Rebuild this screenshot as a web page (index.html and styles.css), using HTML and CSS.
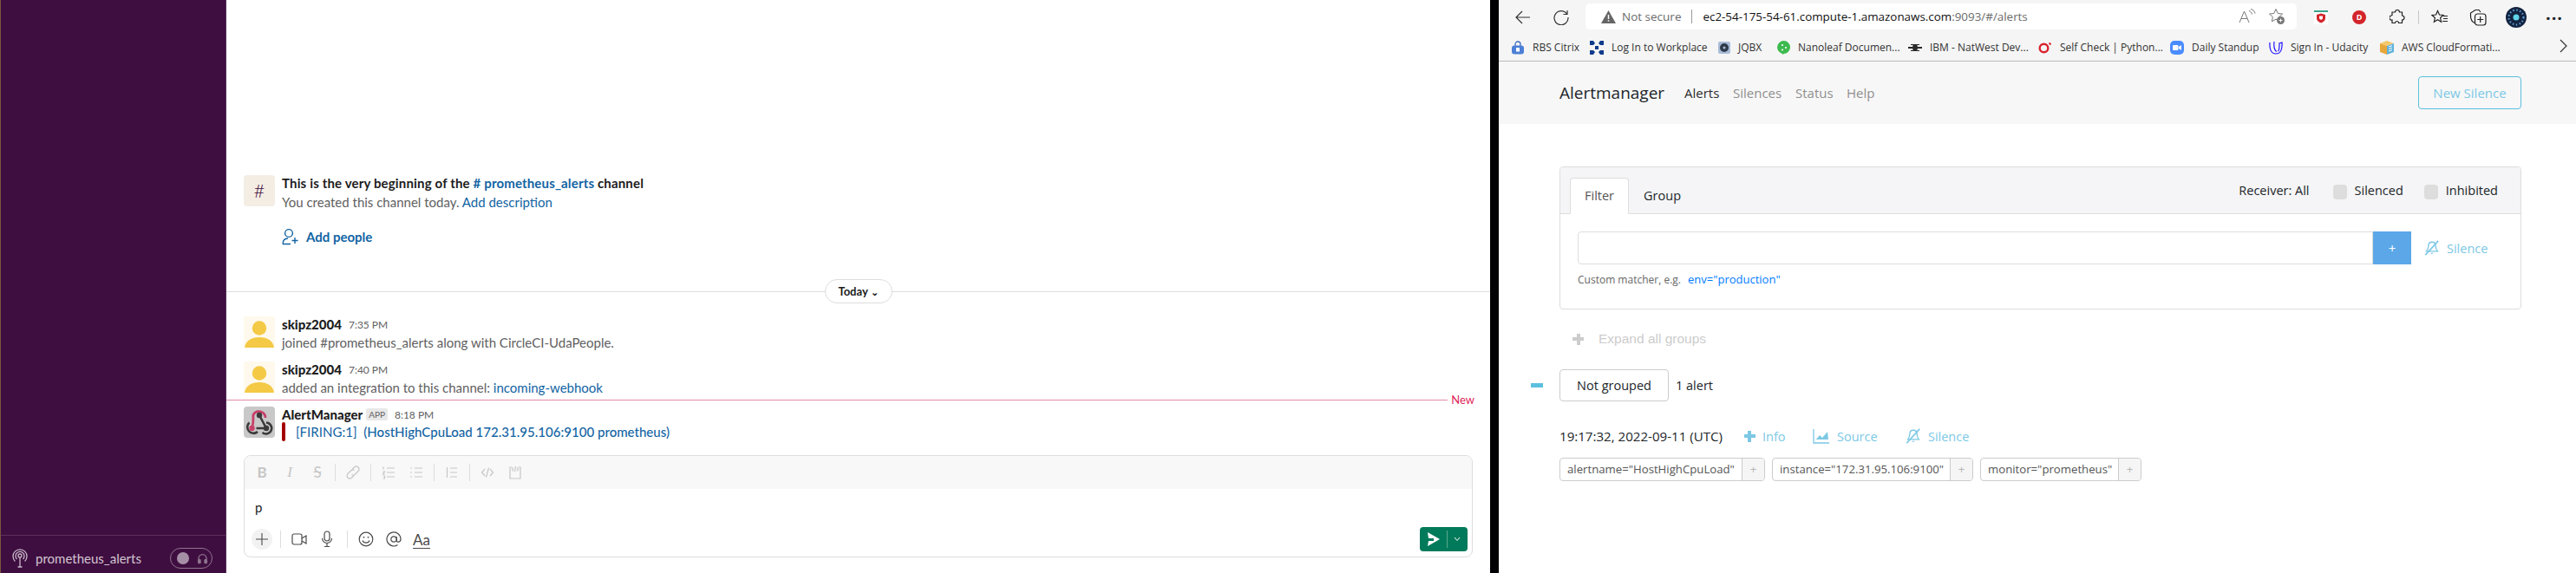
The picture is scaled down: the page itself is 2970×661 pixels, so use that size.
FILE: index.html
```html
<!DOCTYPE html>
<html lang="en">
<head>
    <meta charset="UTF-8">
    <title>Slack and Alertmanager</title>
    <link rel="stylesheet" href="styles.css">
</head>
<body>
    <svg class="sprite" width="0" height="0">
        <symbol id="avatar" viewBox="0 0 36 36">
            <rect width="36" height="36" rx="3" fill="#fef9ec"/>
            <ellipse cx="18" cy="13.5" rx="8.2" ry="8.2" fill="#f4c945"/>
            <path d="M1 36C2 28 9 24 18 24S34 28 35 36Z" fill="#f4c945"/>
        </symbol>
        <symbol id="bell-slash" viewBox="0 0 20 20">
            <path d="M10 2.5c-3 0-4.6 2.2-4.6 5 0 3.4-1 5-2.6 6.8h14.4c-1.6-1.8-2.6-3.4-2.6-6.8 0-2.8-1.6-5-4.6-5z" fill="none" stroke="currentColor" stroke-width="1.5"/>
            <path d="M8 16.5a2.2 2.2 0 0 0 4 0z" fill="currentColor"/>
            <path d="M1.5 19L18 1" stroke="currentColor" stroke-width="1.8"/>
        </symbol>
    </svg>

    <aside class="sidebar">
        <div class="sidebar-spacer"></div>
        <div class="huddle">
            <svg class="huddle-icon" viewBox="0 0 18 22" fill="none" stroke="#c8b9c9" stroke-width="1.3">
                <circle cx="9" cy="8" r="2"/>
                <path d="M5.5 12a5 5 0 1 1 7 0M3.4 14.5a8 8 0 1 1 11.2 0"/>
                <path d="M9 10v11M6.5 21h5"/>
            </svg>
            <span class="huddle-name">prometheus_alerts</span>
            <div class="huddle-toggle">
                <span class="huddle-knob"></span>
                <svg class="huddle-phones" viewBox="0 0 16 16" fill="none" stroke="#8f7490" stroke-width="1.6">
                    <path d="M2.5 11V8a5.5 5.5 0 0 1 11 0v3"/>
                    <rect x="2" y="10" width="3" height="5" rx="1" fill="#8f7490"/>
                    <rect x="11" y="10" width="3" height="5" rx="1" fill="#8f7490"/>
                </svg>
            </div>
        </div>
    </aside>

    <main class="channel">
        <div class="channel-start">
            <div class="hash-box">#</div>
            <div>
                <div class="start-title">This is the very beginning of the <a class="link"># prometheus_alerts</a> channel</div>
                <div class="start-sub">You created this channel today. <a class="link">Add description</a></div>
            </div>
        </div>
        <div class="add-people">
            <svg width="20" height="20" viewBox="0 0 20 20" fill="none" stroke="#1264a3" stroke-width="1.4">
                <circle cx="8" cy="6" r="4.4"/>
                <path d="M1 18.5c0-4 2.5-6.3 6-6.5M1 18.5h9M15 11v7M11.5 14.5h7"/>
            </svg>
            <span>Add people</span>
        </div>
        <div class="day-divider"><span class="day-pill">Today <span class="caret">&#8964;</span></span></div>

        <div class="message">
            <svg class="avatar"><use href="#avatar"/></svg>
            <div>
                <div class="msg-head"><b class="msg-name">skipz2004</b><span class="msg-time">7:35 PM</span></div>
                <div class="msg-text">joined #prometheus_alerts along with CircleCI-UdaPeople.</div>
            </div>
        </div>
        <div class="message">
            <svg class="avatar"><use href="#avatar"/></svg>
            <div>
                <div class="msg-head"><b class="msg-name">skipz2004</b><span class="msg-time">7:40 PM</span></div>
                <div class="msg-text">added an integration to this channel: <a class="link">incoming-webhook</a></div>
            </div>
        </div>
        <div class="new-line"><span class="new-rule"></span><span class="new-label">New</span></div>
        <div class="message message-app">
            <svg class="avatar" viewBox="0 0 36 36" fill="none">
                <rect width="36" height="36" rx="4" fill="#c8c8c8"/>
                <path d="M25 13A7.500 7.500 0 0 0 11 9.500C10.500 13 12 17 9.500 25" stroke="#c9406a" stroke-width="2.800"/>
                <circle cx="9.500" cy="25" r="3.200" fill="#c9406a"/>
                <path d="M18 10l8 15M14.500 25H26M26 18.500A6.500 6.500 0 1 1 21.500 30M6.500 18.500A7 7 0 1 0 16 29" stroke="#3a3a3a" stroke-width="2.600"/>
                <circle cx="18" cy="10" r="3.200" fill="#3a3a3a"/>
                <circle cx="26" cy="25" r="3.200" fill="#3a3a3a"/>
            </svg>
            <div>
                <div class="msg-head"><b class="msg-name">AlertManager</b><span class="app-tag">APP</span><span class="msg-time">8:18 PM</span></div>
                <div class="attachment">
                    <span class="attach-bar"></span>
                    <a class="link attach-text">[FIRING:1]&nbsp; <span class="attach-strong">(HostHighCpuLoad 172.31.95.106:9100 prometheus)</span></a>
                </div>
            </div>
        </div>

        <div class="composer">
            <div class="format-bar">
                <span class="fmt fmt-b">B</span>
                <span class="fmt fmt-i">I</span>
                <span class="fmt fmt-s">S</span>
                <span class="fmt-sep"></span>
                <span class="fmt"><svg width="16" height="16" viewBox="0 0 16 16" fill="none" stroke="#c6c6c6" stroke-width="1.2"><path d="M7 4.5l2.5-2.5a3 3 0 0 1 4.5 4.5l-4 4a3 3 0 0 1-3.5 0M9 11.5L6.500 14a3 3 0 0 1-4.500-4.500l4-4a3 3 0 0 1 3.500 0"/></svg></span>
                <span class="fmt-sep"></span>
                <span class="fmt"><svg width="16" height="16" viewBox="0 0 16 16" fill="none" stroke="#c6c6c6" stroke-width="1.2"><path d="M6 3h9M6 8h9M6 13h9M2 1.500v3M1.500 7h2l-2 3h2M1.500 12h2v3h-2"/></svg></span>
                <span class="fmt"><svg width="16" height="16" viewBox="0 0 16 16" fill="none" stroke="#c6c6c6" stroke-width="1.2"><path d="M6 3h9M6 8h9M6 13h9"/><path d="M2 2.500v1M2 7.500v1M2 12.500v1" stroke-width="1.800"/></svg></span>
                <span class="fmt-sep"></span>
                <span class="fmt"><svg width="16" height="16" viewBox="0 0 16 16" fill="none" stroke="#c6c6c6" stroke-width="1.2"><path d="M2.500 2v12M6 3h8M6 8h8M6 13h8"/></svg></span>
                <span class="fmt-sep"></span>
                <span class="fmt"><svg width="16" height="16" viewBox="0 0 16 16" fill="none" stroke="#c6c6c6" stroke-width="1.2"><path d="M5 4L1.500 8 5 12M11 4l3.500 4L11 12M9.500 2.500l-3 11"/></svg></span>
                <span class="fmt"><svg width="16" height="16" viewBox="0 0 16 16" fill="none" stroke="#c6c6c6" stroke-width="1.2"><path d="M4.500 2H2v13h12V2h-2.500M6 2.500L4.500 4.500 6 6.500M10 2.500l1.500 2L10 6.500M8.500 1l-1 6"/></svg></span>
            </div>
            <div class="input-row">p</div>
            <div class="action-bar">
                <span class="plus-btn"><svg width="14" height="14" viewBox="0 0 14 14" stroke="#4a4a4a" stroke-width="1.1"><path d="M7 0v14M0 7h14"/></svg></span>
                <span class="act-sep"></span>
                <span class="act"><svg width="18" height="16" viewBox="0 0 18 16" fill="none" stroke="#4a4a4a" stroke-width="1.2"><rect x="1" y="2" width="11" height="12" rx="2"/><path d="M12 7l5-3v9l-5-3"/></svg></span>
                <span class="act"><svg width="14" height="20" viewBox="0 0 14 20" fill="none" stroke="#4a4a4a" stroke-width="1.2"><rect x="4" y="1" width="6" height="11" rx="3"/><path d="M1.500 9a5.500 5.500 0 0 0 11 0M7 15v3M4 18.500h6"/></svg></span>
                <span class="act-sep act-sep-wide"></span>
                <span class="act"><svg width="18" height="18" viewBox="0 0 18 18" fill="none" stroke="#4a4a4a" stroke-width="1.2"><circle cx="9" cy="9" r="7.800"/><path d="M5 10.500c1 3.500 7 3.500 8 0"/><path d="M6.500 6v1.500M11.500 6v1.500" stroke-width="1.600"/></svg></span>
                <span class="act"><svg width="18" height="18" viewBox="0 0 18 18" fill="none" stroke="#4a4a4a" stroke-width="1.2"><circle cx="9" cy="9" r="3.200"/><path d="M12.200 6v4.500c0 2.500 4.800 2.500 4.800-1.500a8 8 0 1 0-3.500 6.600"/></svg></span>
                <span class="act act-text">Aa</span>
                <span class="send-btn">
                    <svg class="send-arrow" width="14" height="16" viewBox="0 0 14 16" fill="#fff"><path d="M0 0l14 8L0 16l1-6h6V7H1z"/></svg>
                    <span class="send-sep"></span>
                    <svg width="8" height="6" viewBox="0 0 8 6" fill="none" stroke="#fff" stroke-width="1"><path d="M1 1l3 3.500L7 1"/></svg>
                </span>
            </div>
        </div>
    </main>

    <div class="split"></div>

    <section class="browser">
        <div class="toolbar">
            <span class="tool"><svg width="18" height="16" viewBox="0 0 18 16" fill="none" stroke="#333" stroke-width="1.200"><path d="M17 8H1M8 1L1 8l7 7"/></svg></span>
            <span class="tool"><svg width="18" height="18" viewBox="0 0 18 18" fill="none" stroke="#333" stroke-width="1.200"><path d="M15.500 5A8 8 0 1 0 17 9M16 1v4.500h-4.500"/></svg></span>
            <div class="address">
                <svg width="17" height="15" viewBox="0 0 17 15"><path d="M8.500 0L17 15H0z" fill="#666"/><path d="M8.500 5v5M8.500 11.200v1.600" stroke="#fff" stroke-width="1.500"/></svg>
                <span class="not-secure">Not secure</span>
                <span class="addr-sep"></span>
                <span class="url">ec2-54-175-54-61.compute-1.amazonaws.com<span class="url-dim">:9093/#/alerts</span></span>
                <svg class="addr-read" width="20" height="18" viewBox="0 0 20 18" fill="none" stroke="#777" stroke-width="1"><path d="M1 16L6.500 3 12 16M3 11.500h7M12 2.500c2 .5 3 2 3.500 4M14 .5c2.500.5 4.500 2.500 5 5"/></svg>
                <svg class="addr-star" width="20" height="20" viewBox="0 0 20 20"><path d="M9 1.500l2.300 5 5.200.6-3.900 3.500 1 5.200-4.600-2.600-4.600 2.600 1-5.200L1.500 7.100l5.200-.6z" fill="none" stroke="#777" stroke-width="1"/><circle cx="14.500" cy="14.500" r="4.500" fill="#777"/><path d="M14.500 12.500v4M12.500 14.500h4" stroke="#fff"/></svg>
            </div>
            <span class="tool ext-first">
                <svg width="16" height="16" viewBox="0 0 16 16"><rect width="16" height="16" fill="#fff"/><rect width="16" height="2" fill="#3aa389"/><path d="M3 5l5-1.500L13 5v4c0 3-2.500 4.500-5 5.500C5.500 13.500 3 12 3 9z" fill="#d3242b"/><path d="M6 6.500h4v3L8 11 6 9.500z" fill="#fff"/></svg>
            </span>
            <span class="tool"><span class="ext-d">D</span></span>
            <span class="tool"><svg width="18" height="18" viewBox="0 0 18 18" fill="none" stroke="#222" stroke-width="1.200"><path d="M6.500 3a2.500 2.500 0 0 1 5 0h3v4a2.500 2.500 0 0 1 0 5v3.500h-4a2 2 0 0 0-4 0h-3.500v-3.500a2.500 2.500 0 0 1-1-5 2.500 2.500 0 0 1 1-.5V3z"/></svg></span>
            <span class="tool-sep"></span>
            <span class="tool"><svg width="20" height="18" viewBox="0 0 20 18" fill="none" stroke="#222" stroke-width="1.200"><path d="M7.500 1.500l2 4.500 4.500.5-3.400 3 1 4.700-4.100-2.400-4.100 2.400 1-4.700L1 6.500 5.500 6zM14 7.500h5M14 10.500h5M13 13.500h6"/></svg></span>
            <span class="tool"><svg width="20" height="20" viewBox="0 0 20 20" fill="none" stroke="#222" stroke-width="1.200"><path d="M6 16.500C3 15 1.500 12 1.500 8.500V5L7 1.500h4L13 4"/><rect x="6.500" y="6" width="12.500" height="13" rx="3"/><path d="M12.700 9v7M9.200 12.500h7"/></svg></span>
            <span class="tool"><svg width="24" height="24" viewBox="0 0 24 24"><circle cx="12" cy="12" r="12" fill="#14233f"/><circle cx="12" cy="12" r="8.500" fill="none" stroke="#5fa8e0" stroke-width="2" stroke-dasharray="1.500 2.500"/><circle cx="12" cy="12" r="3.500" fill="#5fd4ea"/></svg></span>
            <span class="tool tool-dots">&#183;&#183;&#183;</span>
        </div>

        <div class="bookmarks">
            <span class="bm"><svg width="16" height="16" viewBox="0 0 16 16"><path d="M5 6V4a3 3 0 0 1 6 0v2" fill="none" stroke="#3d6cc0" stroke-width="1.300"/><rect x="1" y="5.500" width="14" height="10" rx="3" fill="#4c7fd6"/><rect x="6" y="8" width="4" height="4.500" fill="#fff"/></svg>RBS Citrix</span>
            <span class="bm"><svg width="16" height="16" viewBox="0 0 16 16" fill="#0f3c8c"><path d="M0 0h4l2 3-2 2H0zM16 0h-4l-2 3 2 2h4zM0 16h4l2-3-2-2H0zM16 16h-4l-2-3 2-2h4z"/><rect x="6" y="6" width="4" height="4"/></svg>Log In to Workplace</span>
            <span class="bm"><svg width="14" height="14" viewBox="0 0 14 14"><rect width="14" height="14" rx="2" fill="#a9bcd8"/><circle cx="7" cy="7" r="5" fill="#2f3a4a"/><circle cx="7" cy="7" r="1.500" fill="#a9bcd8"/></svg>JQBX</span>
            <span class="bm"><svg width="15" height="16" viewBox="0 0 15 16"><path d="M7.500 0a7.500 7.500 0 0 1 0 15l-1 1-1-1.300A7.500 7.500 0 0 1 7.500 0z" fill="#3dba4e"/><circle cx="6" cy="5" r="1.100" fill="#fff"/><circle cx="10" cy="8" r="1.100" fill="#fff"/><circle cx="6" cy="10.500" r="1.100" fill="#fff"/></svg>Nanoleaf Documen...</span>
            <span class="bm"><svg width="16" height="12" viewBox="0 0 16 12" fill="#2a2a2a"><ellipse cx="8" cy="6" rx="3" ry="4"/><path d="M0 5h5v2H0zM11 5h5v2h-5zM3 2h10v1H3zM3 9h10v1H3z"/></svg>IBM - NatWest Dev...</span>
            <span class="bm"><svg width="16" height="14" viewBox="0 0 16 14" fill="none" stroke="#d9232e" stroke-width="2.400"><circle cx="6.500" cy="7.500" r="4.800"/><path d="M12.500 1.500l2 2" stroke-width="2"/></svg>Self Check | Python...</span>
            <span class="bm"><svg width="16" height="16" viewBox="0 0 16 16"><rect width="16" height="16" rx="5" fill="#4a8cff"/><rect x="3" y="5" width="6.500" height="6" rx="1.200" fill="#fff"/><path d="M10 7l3-2v6l-3-2z" fill="#fff"/></svg>Daily Standup</span>
            <span class="bm"><svg width="16" height="16" viewBox="0 0 16 16" fill="none" stroke="#2015ff" stroke-width="1.200"><path d="M1 2c-.5 7 1 13 7 13s7.500-6 7-13l-3 1c0 4 0 8-1.500 9M6 1c-.5 5 0 10 3 11.500"/></svg>Sign In - Udacity</span>
            <span class="bm"><svg width="16" height="16" viewBox="0 0 16 16"><path d="M0 3l8-3 8 3-8 3z" fill="#f7c96a"/><path d="M0 3l8 3v10l-8-3z" fill="#e8a73a"/><path d="M8 6l8-3v10l-8 3z" fill="#5db2de"/><path d="M10 7l4-1.300M10 9.500l4-1.300M10 12l4-1.300" stroke="#fff"/></svg>AWS CloudFormati...</span>
            <span class="bm-more"><svg width="9" height="16" viewBox="0 0 9 16" fill="none" stroke="#333" stroke-width="1.200"><path d="M1 1l7 7-7 7"/></svg></span>
        </div>

        <nav class="am-nav">
            <span class="am-brand">Alertmanager</span>
            <div class="am-links">
                <span class="am-link am-active">Alerts</span>
                <span class="am-link">Silences</span>
                <span class="am-link">Status</span>
                <span class="am-link">Help</span>
            </div>
            <span class="btn-new">New Silence</span>
        </nav>

        <div class="am-page">
            <div class="card">
                <div class="card-head">
                    <span class="tab tab-active">Filter</span>
                    <span class="tab">Group</span>
                    <span class="receiver">Receiver: All</span>
                    <span class="check"><i class="check-box"></i>Silenced</span>
                    <span class="check"><i class="check-box"></i>Inhibited</span>
                </div>
                <div class="card-body">
                    <div class="filter-row">
                        <div class="filter-input"></div>
                        <span class="filter-add">+</span>
                        <span class="action action-silence"><svg class="bell"><use href="#bell-slash"/></svg>Silence</span>
                    </div>
                    <div class="hint">Custom matcher, e.g. <a class="hint-link">env="production"</a></div>
                </div>
            </div>

            <div class="expand"><span class="expand-plus"></span>Expand all groups</div>

            <div class="group-row">
                <span class="collapse-bar"></span>
                <span class="group-box">Not grouped</span>
                <span class="group-count">1 alert</span>
            </div>

            <div class="alert-row">
                <span class="alert-time">19:17:32, 2022-09-11 (UTC)</span>
                <span class="action action-info"><span class="info-plus"></span>Info</span>
                <span class="action action-source">
                    <svg width="20" height="18" viewBox="0 0 20 18"><path d="M1 1v16h18" fill="none" stroke="currentColor" stroke-width="1.300"/><path d="M3 14l5-6 3 3 6-7 1 9H3z" fill="currentColor"/></svg>Source
                </span>
                <span class="action action-alert-silence"><svg class="bell"><use href="#bell-slash"/></svg>Silence</span>
            </div>

            <div class="labels">
                <span class="label label-name"><span class="label-text">alertname="HostHighCpuLoad"</span><span class="label-add">+</span></span>
                <span class="label label-instance"><span class="label-text">instance="172.31.95.106:9100"</span><span class="label-add">+</span></span>
                <span class="label label-monitor"><span class="label-text">monitor="prometheus"</span><span class="label-add">+</span></span>
            </div>
        </div>
    </section>
</body>
</html>
```

FILE: styles.css
```css
* {
    margin: 0;
    padding: 0;
    box-sizing: border-box;
}

body {
    width: 2970px;
    height: 661px;
    display: flex;
    overflow: hidden;
    background: white;
    font-family: 'Lato', sans-serif;
}

.sprite {
    position: absolute;
}

/* slack sidebar */
.sidebar {
    width: 261px;
    flex: none;
    display: flex;
    flex-direction: column;
    background: #3f0e40;
    border-left: 1px solid #7a5540;
    border-right: 1px solid #5a2f5b;
}

.sidebar-spacer {
    flex: 1;
}

.huddle {
    height: 44px;
    border-top: 1px solid #5a315b;
    display: flex;
    align-items: center;
    padding: 9px 0 0 13px;
}

.huddle-icon {
    width: 18px;
    height: 22px;
}

.huddle-name {
    margin-left: 9px;
    width: 155px;
    color: #d2c6d2;
    font-size: 15px;
}

.huddle-toggle {
    width: 49px;
    height: 24px;
    border: 1px solid #8f7490;
    border-radius: 12px;
    display: flex;
    align-items: center;
    gap: 9px;
    padding-left: 7px;
}

.huddle-knob {
    width: 14px;
    height: 14px;
    border-radius: 50%;
    background: #a58fa6;
}

.huddle-phones {
    width: 13px;
    height: 14px;
}

/* slack channel */
.channel {
    width: 1457px;
    flex: none;
    color: #1d1c1d;
    font-size: 15px;
}

.link {
    color: #1264a3;
}

.channel-start {
    margin: 202px 0 0 20px;
    height: 36px;
    display: flex;
    gap: 8px;
}

.hash-box {
    width: 36px;
    height: 36px;
    border-radius: 4px;
    background: #f4ede4;
    color: #3f0e40;
    font-size: 22px;
    font-weight: 300;
    line-height: 36px;
    text-align: center;
}

.start-title {
    font-weight: 700;
    line-height: 18px;
    letter-spacing: 0.16px;
}

.start-sub {
    margin-top: 4px;
    font-size: 15px;
    line-height: 18px;
    color: #616061;
}

.add-people {
    margin: 25px 0 0 64px;
    height: 20px;
    display: flex;
    align-items: center;
    gap: 8px;
    color: #1264a3;
    font-weight: 700;
}

.day-divider {
    margin-top: 39px;
    height: 28px;
    display: flex;
    justify-content: center;
    position: relative;
}

.day-divider::before {
    content: "";
    position: absolute;
    left: 0;
    right: 0;
    top: 14px;
    border-top: 1px solid #dddddd;
}

.day-pill {
    position: relative;
    width: 78px;
    border: 1px solid #dddddd;
    border-radius: 14px;
    background: white;
    font-size: 13px;
    font-weight: 700;
    line-height: 26px;
    text-align: center;
}

.caret {
    font-size: 11px;
}

.message {
    margin: 15px 0 0 20px;
    height: 36px;
    display: flex;
    gap: 8px;
}

.message + .message {
    margin-top: 16px;
}

.avatar {
    width: 36px;
    height: 36px;
    flex: none;
}

.msg-head {
    height: 18px;
    display: flex;
    align-items: center;
}

.msg-name {
    font-weight: 900;
}

.msg-time {
    margin-left: 8px;
    color: #616061;
    font-size: 12px;
}

.msg-text {
    margin-top: 3px;
    line-height: 18px;
    color: #616061;
}

.new-line {
    margin-top: 8px;
    height: 1px;
    display: flex;
    align-items: center;
    padding-right: 18px;
}

.new-rule {
    flex: 1;
    border-top: 1px solid #e48ba9;
}

.new-label {
    margin-left: 4px;
    color: #e01e5a;
    font-size: 13px;
    line-height: 1px;
}

.message-app {
    margin-top: 7px;
    height: 40px;
}

.app-tag {
    margin-left: 4px;
    padding: 0 3px;
    height: 14px;
    background: #e8e8e8;
    border-radius: 2px;
    color: #616061;
    font-size: 10px;
    line-height: 14px;
}

.attachment {
    margin-top: 0;
    height: 22px;
    display: flex;
    align-items: center;
}

.attach-bar {
    width: 4px;
    height: 22px;
    border-radius: 2px;
    background: #a30200;
}

.attach-text {
    margin-left: 12px;
    font-size: 15px;
    letter-spacing: 0.02px;
}

.attach-strong {
    font-weight: 500;
}

/* message box */
.composer {
    margin: 16px 20px 0;
    height: 118px;
    border: 1px solid #dddddd;
    border-radius: 8px;
    overflow: hidden;
}

.format-bar {
    height: 38px;
    background: #f8f8f8;
    display: flex;
    align-items: center;
    padding-left: 4px;
}

.fmt {
    width: 32px;
    text-align: center;
    color: #c6c6c6;
    font-size: 17px;
    line-height: 18px;
    display: flex;
    justify-content: center;
}

.fmt-b {
    font-weight: 700;
}

.fmt-i {
    font-family: 'Liberation Serif', serif;
    font-style: italic;
}

.fmt-s {
    text-decoration: line-through;
    font-weight: 400;
}

.fmt-sep {
    width: 1px;
    height: 20px;
    margin: 0 4px;
    background: #dddddd;
}

.input-row {
    height: 40px;
    padding-left: 12px;
    font-size: 15px;
    line-height: 42px;
}

.action-bar {
    height: 36px;
    display: flex;
    align-items: center;
    padding: 0 5px 0 8px;
}

.plus-btn {
    width: 24px;
    height: 24px;
    border-radius: 50%;
    background: #f2f2f2;
    display: flex;
    align-items: center;
    justify-content: center;
}

.act-sep {
    width: 1px;
    height: 20px;
    margin: 0 5px 0 9px;
    background: #dddddd;
}

.act-sep-wide {
    margin: 0 5px 0 7px;
}

.act {
    width: 32px;
    display: flex;
    align-items: center;
    justify-content: center;
    color: #4a4a4a;
}

.act-text {
    font-size: 17px;
    text-decoration: underline;
    text-underline-offset: 3px;
}

.send-btn {
    margin-left: auto;
    width: 55px;
    height: 28px;
    border-radius: 4px;
    background: #007a5a;
    display: flex;
    align-items: center;
    padding-left: 9px;
}

.send-sep {
    width: 1px;
    height: 20px;
    margin: 0 7px 0 8px;
    background: #5aa88f;
}

.split {
    width: 10px;
    flex: none;
    background: #020104;
}

/* edge window */
.browser {
    width: 1242px;
    flex: none;
    background: white;
    font-family: 'Open Sans', sans-serif;
    color: #212529;
}

.toolbar {
    height: 40px;
    padding-left: 6px;
    background: #f5f5f5;
    display: flex;
    align-items: center;
}

.tool {
    width: 44px;
    height: 30px;
    flex: none;
    display: flex;
    align-items: center;
    justify-content: center;
}

.address {
    margin: 0 0 2px 6px;
    width: 820px;
    height: 30px;
    flex: none;
    background: white;
    border-radius: 5px;
    display: flex;
    align-items: center;
    padding-left: 18px;
}

.not-secure {
    margin-left: 7px;
    color: #6b6b6b;
    font-size: 13.500px;
}

.addr-sep {
    width: 1px;
    height: 16px;
    margin: 0 12px;
    background: #9a9a9a;
}

.url {
    color: #111;
    font-size: 13.400px;
}

.url-dim {
    color: #6b6b6b;
}

.addr-read {
    margin-left: auto;
}

.addr-star {
    margin: 0 13px 0 14px;
}

.ext-first {
    margin-left: 6px;
}

.ext-d {
    width: 16px;
    height: 16px;
    border-radius: 50%;
    background: #d3242b;
    color: white;
    font-size: 9px;
    font-weight: 700;
    line-height: 16px;
    text-align: center;
}

.tool-sep {
    width: 1px;
    height: 16px;
    flex: none;
    margin: 0 2px;
    background: #c8c8c8;
}

.tool-dots {
    font-size: 20px;
    font-weight: 700;
    letter-spacing: 1px;
}

.bookmarks {
    height: 31px;
    padding: 0 0 1px 14px;
    background: #f5f5f5;
    border-bottom: 1px solid #bdbdbd;
    display: grid;
    grid-template-columns: 91px 148px 68px 151px 150px 152px 114px 128px 207px 9px;
    align-items: center;
    color: #333;
    font-size: 12px;
}

.bm {
    display: flex;
    align-items: center;
    gap: 9px;
    white-space: nowrap;
}

.am-nav {
    height: 72px;
    padding: 0 63px 0 70px;
    background: #f7f7f7;
    display: flex;
    align-items: center;
}

.am-brand {
    width: 136px;
    font-size: 19px;
}

.am-links {
    display: grid;
    grid-template-columns: 56px 72px 59px 48px;
    font-size: 15px;
}

.am-link {
    padding-left: 8px;
    color: #8f8f8f;
}

.am-active {
    color: #2c2c2c;
}

.btn-new {
    margin-left: auto;
    width: 119px;
    height: 38px;
    border: 1px solid #5bc0de;
    border-radius: 4px;
    color: #7cc8e5;
    font-size: 15px;
    line-height: 36px;
    text-align: center;
}

.am-page {
    padding: 49px 63px 0 70px;
}

.card {
    height: 165px;
    border: 1px solid #dddddd;
    border-radius: 4px;
}

.card-head {
    height: 54px;
    padding: 12px 26px 0 11px;
    background: #f5f5f7;
    border-bottom: 1px solid #dddddd;
    border-radius: 4px 4px 0 0;
    display: flex;
    font-size: 14.500px;
}

.tab {
    height: 42px;
    padding: 0 16px;
    border: 1px solid transparent;
    line-height: 40px;
}

.tab-active {
    background: white;
    border-color: #dddddd #dddddd white;
    border-radius: 4px 4px 0 0;
    color: #555;
}

.receiver {
    margin-left: auto;
    line-height: 30px;
}

.check {
    margin-left: 27px;
    display: flex;
    align-items: flex-start;
    line-height: 30px;
}

.check + .check {
    margin-left: 24px;
}

.check-box {
    width: 16px;
    height: 17px;
    margin: 8px 9px 0 0;
    background: #dddddd;
    border-radius: 4px;
}

.card-body {
    padding: 20px 35px 0 20px;
}

.filter-row {
    height: 38px;
    display: flex;
    align-items: center;
}

.filter-input {
    flex: 1;
    height: 38px;
    border: 1px solid #dddddd;
    border-radius: 4px 0 0 4px;
    background: white;
}

.filter-add {
    width: 44px;
    height: 38px;
    background: #5ca7e8;
    color: white;
    font-size: 15px;
    line-height: 38px;
    text-align: center;
}

.action {
    display: flex;
    align-items: center;
    gap: 8px;
    color: #7cc8e5;
    font-size: 14.500px;
}

.action-silence {
    margin-left: 15px;
    width: 76px;
}

.bell {
    width: 18px;
    height: 18px;
    color: #7cc8e5;
}

.hint {
    margin-top: 8px;
    font-size: 12px;
    line-height: 18px;
    color: #666;
}

.hint-link {
    margin-left: 5px;
    font-size: 13px;
    color: #007bff;
}

.expand {
    margin-top: 22px;
    height: 24px;
    padding-left: 15px;
    display: flex;
    align-items: center;
    gap: 17px;
    color: #cccccc;
    font-family: 'Liberation Sans', sans-serif;
    font-size: 15.500px;
}

.expand-plus, .info-plus {
    width: 13px;
    height: 13px;
    background: linear-gradient(currentColor, currentColor) center / 100% 4px no-repeat,
                linear-gradient(currentColor, currentColor) center / 4px 100% no-repeat;
}

.group-row {
    margin: 23px 0 0 -33px;
    height: 37px;
    display: flex;
    align-items: center;
}

.collapse-bar {
    width: 14px;
    height: 5px;
    margin-right: 19px;
    background: #5bc0de;
}

.group-box {
    width: 126px;
    height: 37px;
    border: 1px solid #cccccc;
    border-radius: 4px;
    font-size: 14.500px;
    line-height: 35px;
    text-align: center;
}

.group-count {
    margin-left: 8px;
    font-size: 14.500px;
}

.alert-row {
    margin-top: 29px;
    height: 22px;
    display: flex;
    align-items: center;
    font-size: 15.100px;
}

.action-info {
    margin-left: 25px;
    width: 79px;
}

.action-source {
    width: 107px;
}

.labels {
    margin-top: 14px;
    height: 27px;
    display: flex;
    gap: 8px;
}

.label {
    display: flex;
    height: 27px;
    border: 1px solid #cccccc;
    border-radius: 4px;
    font-size: 13.200px;
    color: #555;
}

.label-name {
    width: 237px;
}

.label-instance {
    width: 232px;
}

.label-monitor {
    width: 186px;
}

.label-text {
    flex: 1;
    padding-left: 8px;
    line-height: 25px;
    white-space: nowrap;
}

.label-add {
    width: 26px;
    background: #f5f5f5;
    border-left: 1px solid #cccccc;
    border-radius: 0 3px 3px 0;
    color: #b5b5b5;
    line-height: 25px;
    text-align: center;
}
```
